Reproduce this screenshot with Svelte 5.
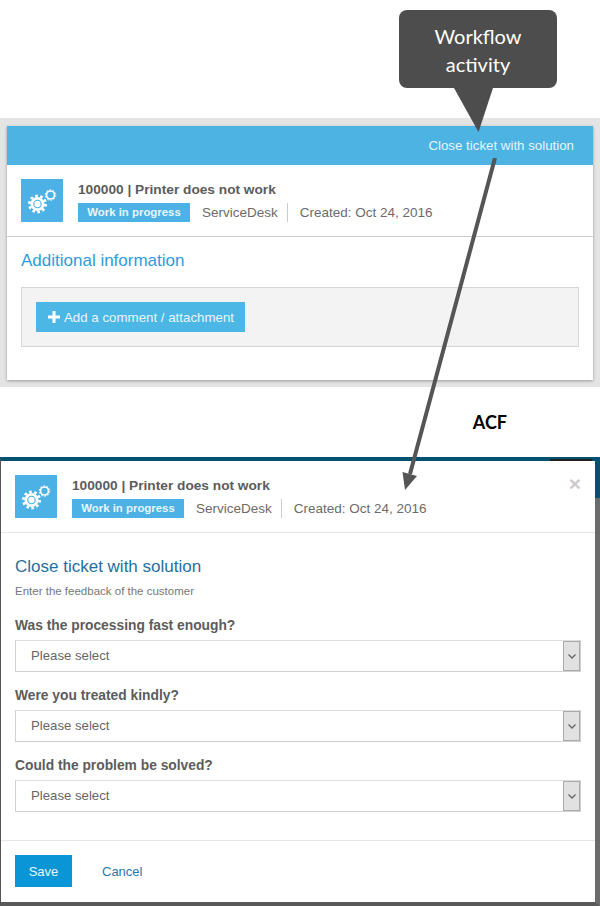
<script>
  const questions = [
    "Was the processing fast enough?",
    "Were you treated kindly?",
    "Could the problem be solved?"
  ];
</script>

{#snippet ticketHead()}
  <div class="tile">
    <svg width="42" height="43" viewBox="0 0 42 43">
      <circle cx="16.500" cy="25" r="8" fill="none" stroke="#fff" stroke-width="3" stroke-dasharray="2.600 2.420" />
      <circle cx="16.500" cy="25" r="7" fill="#fff" />
      <circle cx="16.500" cy="25" r="3.700" fill="none" stroke="#4cb1e5" stroke-width="1.100" />
      <circle cx="29.500" cy="16" r="4" fill="none" stroke="#fff" stroke-width="1.700" />
      <circle cx="29.500" cy="16" r="5.300" fill="none" stroke="#fff" stroke-width="1" stroke-dasharray="1.600 1.730" />
    </svg>
  </div>
  <div class="info">
    <div class="title">100000 | Printer does not work</div>
    <div class="meta">
      <span class="status">Work in progress</span>
      <span class="queue">ServiceDesk</span>
      <span class="created">Created: Oct 24, 2016</span>
    </div>
  </div>
{/snippet}

<div class="page">
  <div class="callout">
    <div class="bubble">Workflow<br />activity</div>
    <svg class="tail" width="40" height="45" viewBox="0 0 40 45">
      <path d="M0 0H39L24.500 44Z" fill="#4d4d4d" />
    </svg>
  </div>

  <svg class="arrow" width="110" height="340" viewBox="0 0 110 340">
    <path d="M93 0L8 316" stroke="#555" stroke-width="4" fill="none" />
    <path d="M0.500 314L15 318L3 332Z" fill="#555" />
  </svg>

  <section class="band">
    <div class="card">
      <div class="action-bar">Close ticket with solution</div>
      <div class="head">
        {@render ticketHead()}
      </div>
      <div class="details">
        <h2>Additional information</h2>
        <div class="comments">
          <button class="add">
            <svg width="12" height="12" viewBox="0 0 12 12"><path d="M4.500 0h3v4.500H12v3H7.500V12h-3V7.500H0v-3h4.500z" fill="#fff" /></svg>
            Add a comment / attachment
          </button>
        </div>
      </div>
    </div>
  </section>

  <div class="acf-row"><span class="acf">ACF</span></div>

  <section class="modal">
    <div class="head modal-head">
      {@render ticketHead()}
      <span class="close">×</span>
    </div>
    <div class="form">
      <h3>Close ticket with solution</h3>
      <p class="hint">Enter the feedback of the customer</p>
      {#each questions as question}
        <div class="field">
          <div class="question">{question}</div>
          <div class="select">
            <span class="value">Please select</span>
            <span class="caret">
              <svg width="8" height="5" viewBox="0 0 8 5"><path d="M0.500 0.500l3.500 3.500 3.500-3.500" fill="none" stroke="#666" stroke-width="1.300" /></svg>
            </span>
          </div>
        </div>
      {/each}
    </div>
    <div class="footer">
      <button class="save">Save</button>
      <span class="cancel">Cancel</span>
    </div>
  </section>
</div>

<style>
  :global(body) {
    margin: 0;
    background: #fff;
  }
  .page {
    position: relative;
    width: 600px;
    height: 906px;
    overflow: hidden;
    font-family: "Liberation Sans", Arial, sans-serif;
    color: #555;
  }
  .callout {
    position: absolute;
    left: 399px;
    top: 10px;
    width: 158px;
    z-index: 2;
  }
  .bubble {
    box-sizing: border-box;
    height: 78px;
    padding-top: 12px;
    border-radius: 8px;
    background: #4d4d4d;
    color: #fff;
    font-family: Lato, sans-serif;
    font-size: 20px;
    line-height: 28px;
    text-align: center;
  }
  .tail {
    display: block;
    margin-left: 55px;
  }
  .arrow {
    position: absolute;
    left: 402px;
    top: 158px;
    z-index: 2;
  }
  .band {
    box-sizing: border-box;
    height: 269px;
    margin-top: 118px;
    padding: 8px 7px 7px;
    background: #e4e4e4;
  }
  .card {
    height: 254px;
    background: #fff;
    box-shadow: 0 1px 3px #999;
  }
  .action-bar {
    box-sizing: border-box;
    height: 39px;
    padding: 12px 19px 0 0;
    background: #4cb3e3;
    color: #e6f5fc;
    font-size: 13.300px;
    line-height: 15px;
    text-align: right;
  }
  .head {
    display: flex;
    gap: 15px;
    box-sizing: border-box;
    height: 72px;
    padding: 14px 14px 0;
    border-bottom: 1px solid #ccc;
  }
  .tile {
    flex: none;
    width: 42px;
    height: 43px;
    background: #4cb1e5;
  }
  .tile svg {
    display: block;
  }
  .info {
    min-width: 0;
  }
  .title {
    margin-top: 3px;
    font-size: 13.700px;
    font-weight: bold;
    line-height: 15px;
    color: #5c5c5c;
  }
  .meta {
    display: flex;
    align-items: center;
    height: 19px;
    margin-top: 6px;
    font-size: 13.500px;
    color: #6b6b6b;
  }
  .status {
    box-sizing: border-box;
    width: 112px;
    height: 19px;
    background: #4cb1e5;
    color: #e8f6fc;
    font-size: 11.400px;
    font-weight: bold;
    line-height: 18px;
    text-align: center;
  }
  .queue {
    margin-left: 12px;
    padding-right: 9px;
    line-height: 19px;
    border-right: 1px solid #ccc;
  }
  .created {
    margin-left: 12px;
  }
  .details {
    padding: 14px 14px 0;
  }
  h2 {
    margin: 0;
    font-size: 17px;
    font-weight: normal;
    line-height: 20px;
    color: #2d9cdb;
  }
  .comments {
    box-sizing: border-box;
    height: 60px;
    margin-top: 16px;
    padding: 14px;
    background: #f3f3f3;
    border: 1px solid #d6d6d6;
  }
  .add {
    display: flex;
    align-items: center;
    gap: 4px;
    height: 30px;
    width: 209px;
    padding: 0 0 0 12px;
    border: 0;
    background: #4cb6e5;
    color: #e8f6fc;
    font: 13.300px "Liberation Sans", Arial, sans-serif;
  }
  .acf-row {
    display: flex;
    justify-content: flex-end;
    height: 70px;
    padding-right: 93px;
  }
  .acf {
    margin-top: 25px;
    font-family: Lato, sans-serif;
    font-size: 18px;
    font-weight: bold;
    line-height: 20px;
    color: #000;
  }
  .modal {
    position: relative;
    box-sizing: border-box;
    height: 449px;
    background: #fff;
    border-style: solid;
    border-color: #04506f #6b6b6b #595959 #555;
    border-width: 4px 5px 4px 1px;
  }
  /* teal part of the right edge and the dark strip along the top */
  .modal::before {
    content: "";
    position: absolute;
    top: -4px;
    right: -5px;
    width: 5px;
    height: 41px;
    background: #04506f;
  }
  .modal::after {
    content: "";
    position: absolute;
    top: -2px;
    left: 549px;
    width: 42px;
    height: 2px;
    background: #222;
  }
  .modal-head {
    position: relative;
    height: 72px;
    border-bottom-color: #e6e6e6;
    padding-top: 14px;
  }
  .close {
    position: absolute;
    right: 14px;
    top: 13px;
    color: #ccc;
    font-size: 21px;
    font-weight: bold;
    line-height: 20px;
  }
  .form {
    box-sizing: border-box;
    height: 308px;
    padding: 24px 14px 0;
    border-bottom: 1px solid #e6e6e6;
  }
  h3 {
    margin: 0;
    font-size: 17px;
    font-weight: normal;
    line-height: 20px;
    color: #1f6f9f;
  }
  .hint {
    margin: 8px 0 0;
    font-size: 11.500px;
    line-height: 13px;
    color: #777;
  }
  .field {
    margin-top: 20px;
  }
  .field + .field {
    margin-top: 16px;
  }
  .question {
    font-size: 13.800px;
    font-weight: bold;
    line-height: 15px;
    color: #5c5c5c;
  }
  .select {
    display: flex;
    justify-content: space-between;
    box-sizing: border-box;
    height: 32px;
    margin-top: 7px;
    border: 1px solid #d0d0d0;
    border-top-color: #ddd;
    font-size: 13.200px;
    line-height: 30px;
    color: #666;
  }
  .value {
    padding-left: 15px;
  }
  .caret {
    display: flex;
    align-items: center;
    justify-content: center;
    box-sizing: border-box;
    width: 17px;
    background: #e1e1e1;
    border: 1px solid #aaa;
  }
  .footer {
    display: flex;
    align-items: center;
    gap: 30px;
    padding: 14px 14px 0;
  }
  .save {
    width: 57px;
    height: 32px;
    padding: 0;
    border: 0;
    background: #0a96d6;
    color: #eaf6fc;
    font: 13px "Liberation Sans", Arial, sans-serif;
  }
  .cancel {
    font-size: 13px;
    color: #2c78a8;
  }
</style>
